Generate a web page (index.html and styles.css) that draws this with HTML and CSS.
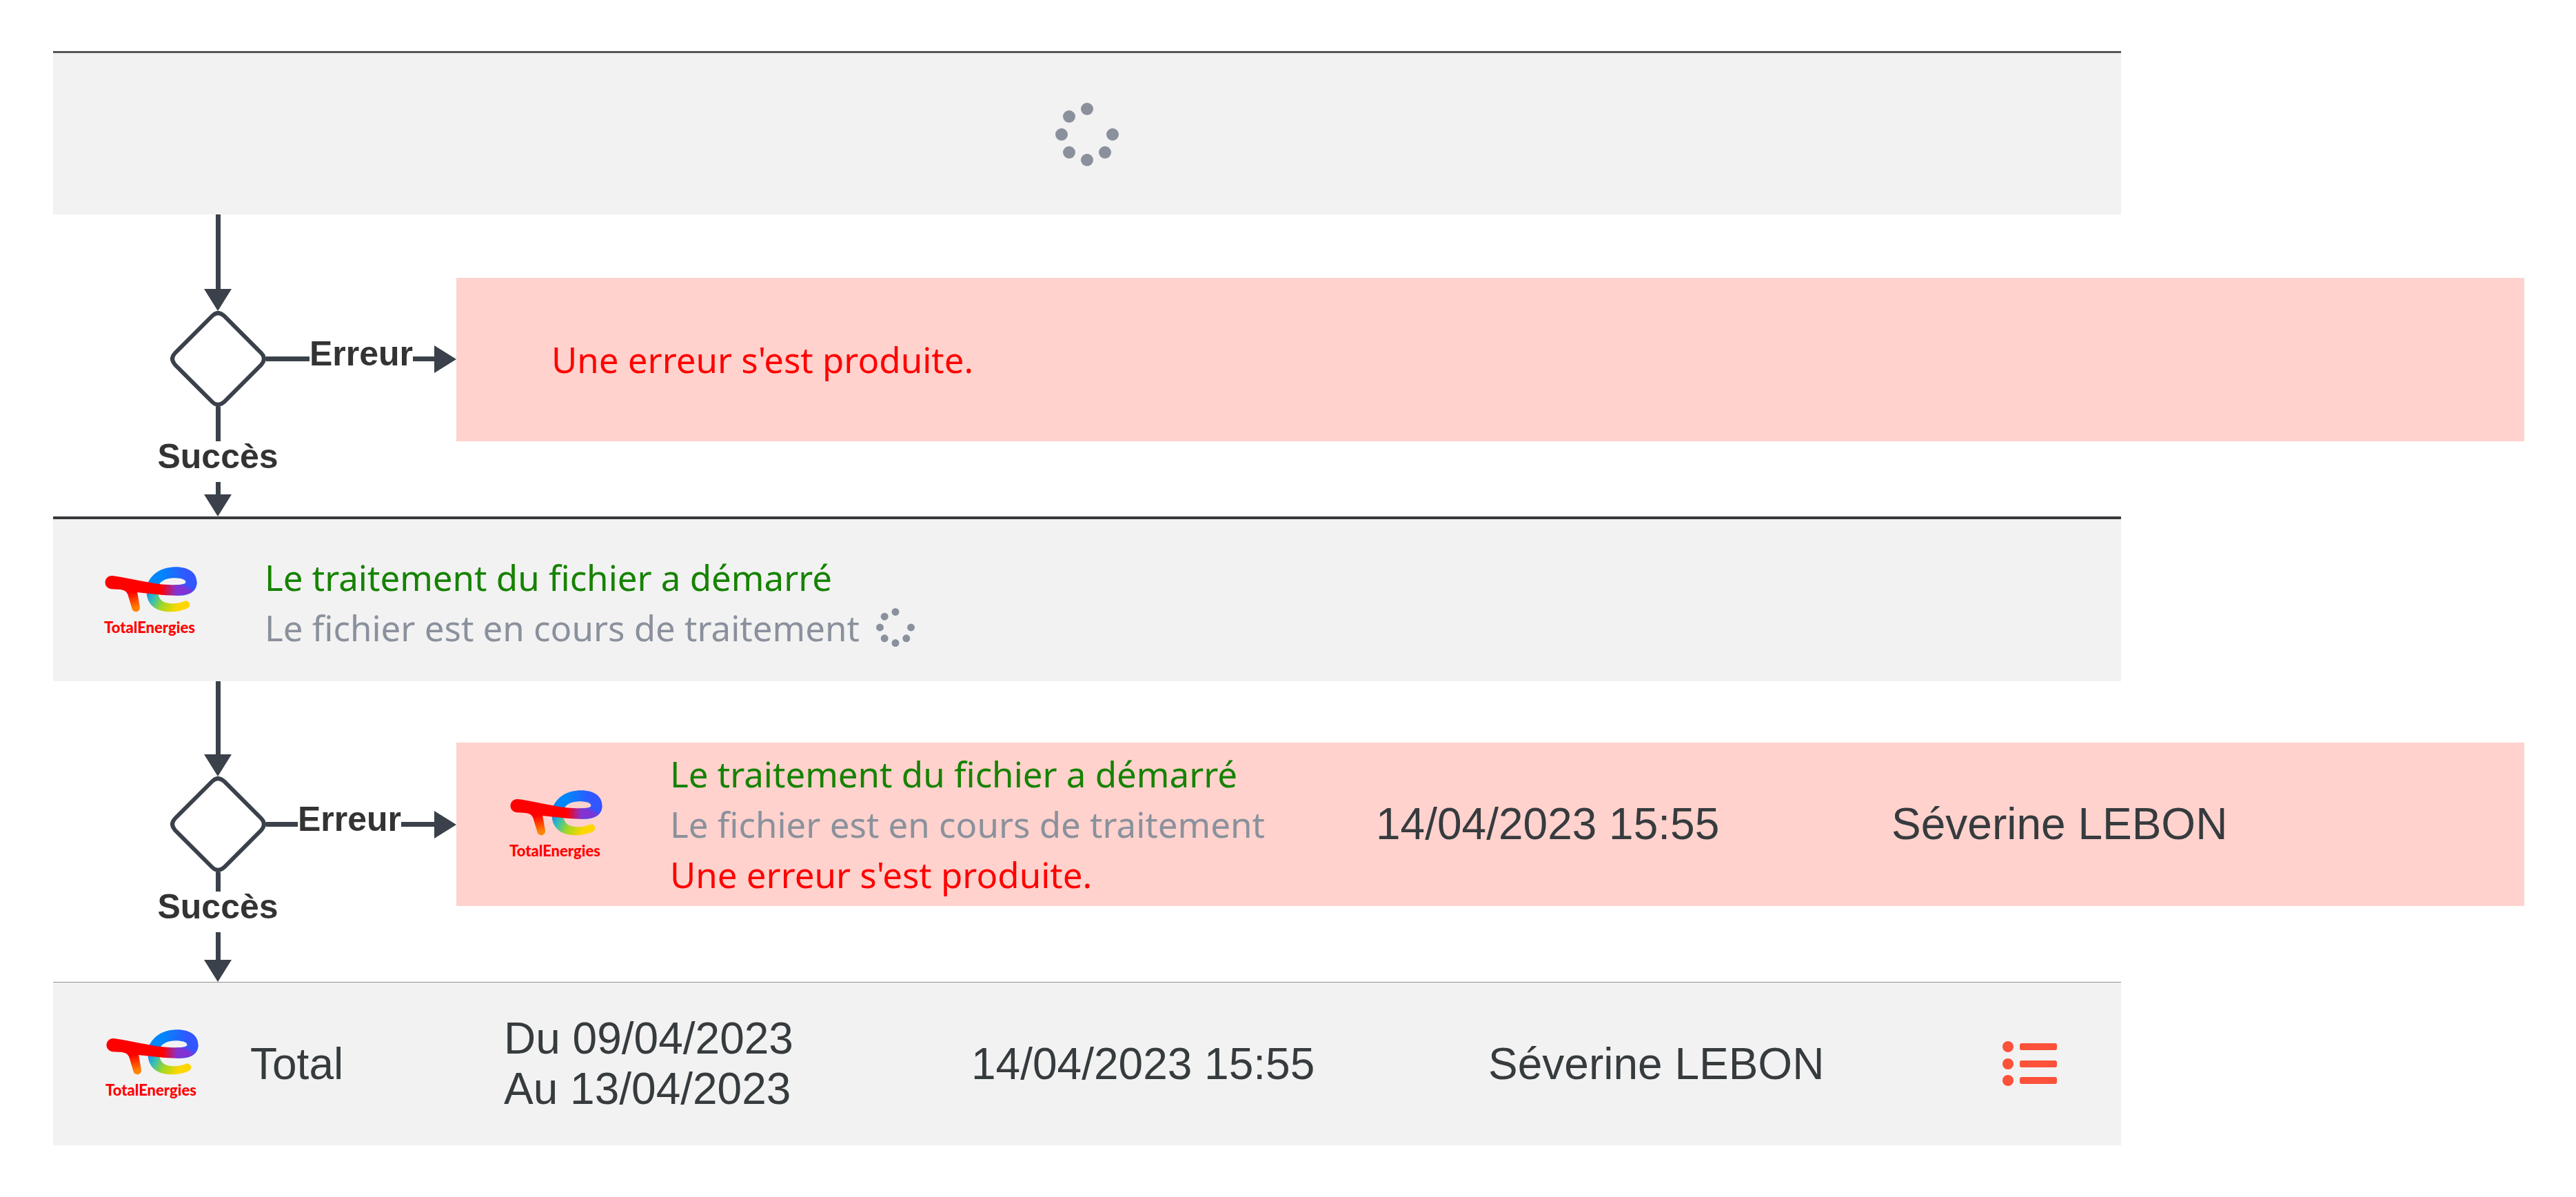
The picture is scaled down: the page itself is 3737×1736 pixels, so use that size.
FILE: index.html
```html
<!DOCTYPE html>
<html lang="fr">
<head>
<meta charset="utf-8">
<title>Traitement du fichier</title>
<link rel="stylesheet" href="styles.css">
</head>
<body>
<svg class="defs" aria-hidden="true">
  <defs>
    <linearGradient id="g-bowl" gradientUnits="userSpaceOnUse" x1="340" y1="0" x2="450" y2="0"><stop offset="0" stop-color="#0087fc"/><stop offset="1" stop-color="#3256ff"/></linearGradient>
    <linearGradient id="g-turn" gradientUnits="userSpaceOnUse" x1="446" y1="194" x2="458" y2="174"><stop offset="0" stop-color="#8133d3"/><stop offset="1" stop-color="#3256ff"/></linearGradient>
    <linearGradient id="g-arm" gradientUnits="userSpaceOnUse" x1="340" y1="0" x2="420" y2="0"><stop offset="0" stop-color="#ff0000"/><stop offset=".75" stop-color="#8e30c0"/><stop offset="1" stop-color="#8133d3"/></linearGradient>
    <linearGradient id="g-leg" gradientUnits="userSpaceOnUse" x1="215" y1="205" x2="230" y2="275"><stop offset="0" stop-color="#ff0000"/><stop offset="1" stop-color="#ff8200"/></linearGradient>
    <linearGradient id="g-base" gradientUnits="userSpaceOnUse" x1="280" y1="205" x2="410" y2="275"><stop offset="0" stop-color="#1f8df0"/><stop offset=".25" stop-color="#37c0b4"/><stop offset=".58" stop-color="#a5d820"/><stop offset="1" stop-color="#ffd700"/></linearGradient>
    <symbol id="te" viewBox="92 95 404 198">
      <path fill="url(#g-base)" d="M276 200C276 262 318 291 382 291C413 291 439 283 453 276A16 16 0 0 0 442 244C426 251 408 255 390 255C352 255 328 240 326 206Z"/>
      <path fill="url(#g-bowl)" d="M280 170C300 122 346 96 404 96C461 96 495 122 495 163C495 200 465 220 420 220H400V174C430 174 447 171 447 162C447 151 427 144 395 144C365 144 341 155 331 172Z"/>
      <path fill="url(#g-turn)" d="M400 174C430 174 447 171 447 162H495C495 200 465 220 400 220Z"/>
      <path fill="url(#g-leg)" d="M175 196Q190 200 196 220L213 277A17 17 0 0 0 247 270L235 200Z"/>
      <path fill="url(#g-arm)" d="M128 134C180 140 232 154 282 162C325 171 360 174 401 174V220C350 220 290 212 235 206L194 209C184 196 168 194 150 193L122 192A29 29 0 1 1 128 134Z"/>
    </symbol>
    <symbol id="dots" viewBox="0 0 92 92">
      <g fill="#8a919c"><circle cx="46" cy="9" r="9"/><circle cx="20" cy="20" r="9"/><circle cx="9" cy="46" r="9"/><circle cx="20" cy="72" r="9"/><circle cx="46" cy="83" r="9"/><circle cx="72" cy="72" r="9"/><circle cx="83" cy="46" r="9"/></g>
    </symbol>
    <symbol id="diamond" viewBox="0 0 139 139">
      <path fill="#fff" stroke="#3a414a" stroke-width="6" d="M61 7Q69 -1 78 7L132 61Q140 69 132 78L78 132Q69 140 61 132L7 78Q-1 69 7 61Z"/>
    </symbol>
  </defs>
</svg>
<main class="page">
  <section class="card card-loading">
    <svg class="spinner" role="img" aria-label="Chargement"><use href="#dots"/></svg>
  </section>

  <div class="branch">
    <div class="flow">
      <div class="stem stem-in"></div>
      <svg class="head-down" viewBox="0 0 40 32"><path d="M0 0H40L20 32Z"/></svg>
      <div class="decision">
        <svg class="diamond"><use href="#diamond"/></svg>
        <div class="link link-long"></div>
        <span class="label">Erreur</span>
        <div class="link link-end"></div>
        <svg class="head-right" viewBox="0 0 32 40"><path d="M0 0L32 20L0 40Z"/></svg>
      </div>
      <div class="stem stem-mid"></div>
      <span class="label">Succès</span>
      <div class="stem stem-out"></div>
      <svg class="head-down" viewBox="0 0 40 32"><path d="M0 0H40L20 32Z"/></svg>
    </div>
    <section class="card error error-simple">
      <p class="msg bad">Une erreur s'est produite.</p>
    </section>
  </div>

  <section class="card card-started">
    <div class="logo"><svg class="mark" aria-hidden="true"><use href="#te"/></svg><span class="brand">TotalEnergies</span></div>
    <div class="messages">
      <p class="msg good">Le traitement du fichier a démarré</p>
      <p class="msg muted">Le fichier est en cours de traitement <svg class="spinner-small" aria-hidden="true"><use href="#dots"/></svg></p>
    </div>
  </section>

  <div class="branch branch-second">
    <div class="flow">
      <div class="stem stem-in"></div>
      <svg class="head-down" viewBox="0 0 40 32"><path d="M0 0H40L20 32Z"/></svg>
      <div class="decision">
        <svg class="diamond"><use href="#diamond"/></svg>
        <div class="link link-short"></div>
        <span class="label">Erreur</span>
        <div class="link link-end"></div>
        <svg class="head-right" viewBox="0 0 32 40"><path d="M0 0L32 20L0 40Z"/></svg>
      </div>
      <div class="stem stem-mid"></div>
      <span class="label">Succès</span>
      <div class="stem stem-out"></div>
      <svg class="head-down" viewBox="0 0 40 32"><path d="M0 0H40L20 32Z"/></svg>
    </div>
    <section class="card error error-detail">
      <div class="logo"><svg class="mark" aria-hidden="true"><use href="#te"/></svg><span class="brand">TotalEnergies</span></div>
      <div class="messages">
        <p class="msg good">Le traitement du fichier a démarré</p>
        <p class="msg muted">Le fichier est en cours de traitement</p>
        <p class="msg bad">Une erreur s'est produite.</p>
      </div>
      <p class="data">14/04/2023 15:55</p>
      <p class="data">Séverine LEBON</p>
    </section>
  </div>

  <section class="card card-done">
    <div class="logo"><svg class="mark" aria-hidden="true"><use href="#te"/></svg><span class="brand">TotalEnergies</span></div>
    <p class="data">Total</p>
    <p class="data">Du 09/04/2023<br>Au 13/04/2023</p>
    <p class="data">14/04/2023 15:55</p>
    <p class="data">Séverine LEBON</p>
    <button class="details" type="button" aria-label="Détails">
      <svg viewBox="0 0 79 66"><circle cx="8" cy="8" r="8"/><circle cx="8" cy="33" r="8"/><circle cx="8" cy="57" r="8"/><rect x="25" y="3" width="54" height="10" rx="3"/><rect x="25" y="28" width="54" height="10" rx="3"/><rect x="25" y="52" width="54" height="10" rx="3"/></svg>
    </button>
  </section>
</main>
</body>
</html>
```
FILE: styles.css
```css
* { box-sizing: border-box; }

body {
  margin: 0;
  background: #fff;
  color: #363b3e;
  font-family: "Liberation Sans", Arial, sans-serif;
}

p { margin: 0; }
svg { display: block; flex: none; }
.defs { position: absolute; width: 0; height: 0; }

.page {
  display: flex;
  flex-direction: column;
  padding: 74px 75px 75px 77px;
}

/* Status rows */
.card {
  display: grid;
  align-items: center;
  min-height: 237px;
  margin-right: 585px;
  background: #f2f2f2;
  white-space: nowrap;
}

.card-loading {
  justify-items: center;
  padding-top: 2px;
  border-top: 3px solid #56575b;
}

.card-started {
  grid-template-columns: 74fr 233fr 2693fr;
  min-height: 239px;
  padding-top: 2px;
  border-top: 4px solid #38393d;
}

.card-done {
  grid-template-columns: 76fr 210fr 368fr 678fr 750fr 746fr 172fr;
  border-top: 1px solid #8f8f8f;
}

.error {
  align-self: start;
  margin: 92px 0 0;
  background: #ffd2cd;
}

.error-simple { padding-left: 138px; }

.error-detail {
  grid-template-columns: 77fr 233fr 1024fr 748fr 918fr;
  margin-top: 89px;
}

.card > .logo { grid-column: 2; }

/* Text */
.msg {
  display: flex;
  align-items: center;
  gap: 24px;
  font-family: "Noto Sans", sans-serif;
  font-size: 51px;
  line-height: 73px;
}

.good { color: #168200; }
.muted { color: #8a919c; }
.bad { color: #f00; }

.data {
  font-size: 64px;
  line-height: 73px;
}

.card-started .messages { padding-top: 4px; }

/* Logo */
.logo {
  display: flex;
  flex-direction: column;
  gap: 10px;
  width: 135px;
}

.mark { width: 135px; height: 66px; }

.brand {
  color: #f00;
  font-family: Lato, sans-serif;
  font-size: 22px;
  font-weight: 900;
  line-height: 24px;
}

.spinner { width: 92px; height: 92px; }
.spinner-small { width: 56px; height: 56px; }

.details {
  padding: 0;
  border: 0;
  background: none;
  width: 79px;
  cursor: pointer;
}

.details svg { width: 79px; height: 66px; fill: #fc513a; }

/* Flow between two rows */
.branch {
  display: grid;
  grid-template-columns: 585px 1fr;
}

.flow {
  display: flex;
  flex-direction: column;
  align-items: center;
  padding-right: 107px;
}

.stem { width: 7px; background: #3a414a; }
.stem-in { height: 108px; }
.stem-mid { height: 50px; }
.stem-out { height: 18px; }
.branch-second .stem-in { height: 106px; }
.branch-second .stem-mid { height: 28px; }
.branch-second .stem-out { height: 40px; }

.head-down { width: 40px; height: 32px; fill: #3a414a; }
.head-right { width: 32px; height: 40px; fill: #3a414a; }

.decision {
  display: flex;
  align-items: center;
  align-self: stretch;
  margin-right: -107px;
  padding-left: 170px;
}

.diamond { width: 139px; height: 139px; }

.link { height: 7px; background: #3a414a; }
.link-long { width: 63px; }
.link-short { width: 46px; }
.link-end { flex: 1; }

.label {
  padding-bottom: 15px;
  color: #333;
  font-size: 50px;
  font-weight: 700;
  line-height: 44px;
}
```
